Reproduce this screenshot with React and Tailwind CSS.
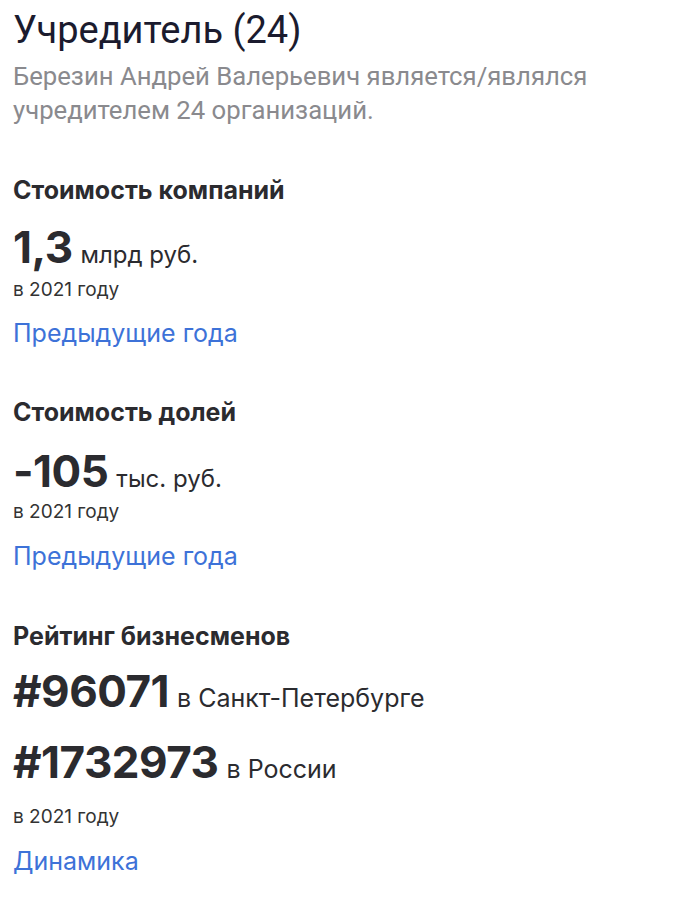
const sans = "font-['Inter','Noto_Sans',sans-serif]"

function Year({ className = '' }) {
  return <p className={`text-[19px] leading-[24px] text-[#333] ${className}`}>в 2021 году</p>
}

function LinkText({ children, className = '' }) {
  return (
    <p className={`leading-[30px] ${className}`}>
      <a href="#" className="text-[25px] text-[#3d72d8]">
        {children}
      </a>
    </p>
  )
}

function Heading({ children, className = '' }) {
  return (
    <h2 className={`text-[25px] font-bold leading-[30px] text-[#2b2b2f] ${className}`}>
      {children}
    </h2>
  )
}

function Figure({ value, unit, small = false, className = '' }) {
  return (
    <div className={`flex h-[48px] items-baseline gap-[8px] text-[#2b2b2f] ${className}`}>
      <span className="text-[44px] font-bold leading-[48px] tracking-[-0.5px]">{value}</span>
      <span className={`${small ? 'text-[24px]' : 'text-[25px]'} leading-none`}>{unit}</span>
    </div>
  )
}

export default function App() {
  return (
    <main className={`min-h-[907px] w-[680px] bg-white px-[13px] pt-[10px] ${sans}`}>
      <h1 className="font-['Roboto',sans-serif] text-[38px] leading-[40px] text-[#1b1b2e]">
        Учредитель (24)
      </h1>
      <p className="mt-[9px] font-['Roboto',sans-serif] text-[25.7px] leading-[34px] text-[#8a8a8e]">
        Березин Андрей Валерьевич является/являлся
        <br />
        учредителем 24 организаций.
      </p>

      <section className="mt-[48px]">
        <Heading>Стоимость компаний</Heading>
        <Figure className="mt-[18px]" value="1,3" unit="млрд руб." small />
        <Year className="mt-[7px]" />
        <LinkText className="mt-[16px]">Предыдущие года</LinkText>
      </section>

      <section className="mt-[46px]">
        <Heading>Стоимость долей</Heading>
        <Figure className="mt-[20px]" value="-105" unit="тыс. руб." small />
        <Year className="mt-[5px]" />
        <LinkText className="mt-[17px]">Предыдущие года</LinkText>
      </section>

      <section className="mt-[47px]">
        <Heading>Рейтинг бизнесменов</Heading>
        <Figure className="mt-[16px]" value="#96071" unit="в Санкт-Петербурге" />
        <Figure className="mt-[23px]" value="#1732973" unit="в России" />
        <Year className="mt-[19px]" />
        <LinkText className="mt-[17px]">Динамика</LinkText>
      </section>
    </main>
  )
}
